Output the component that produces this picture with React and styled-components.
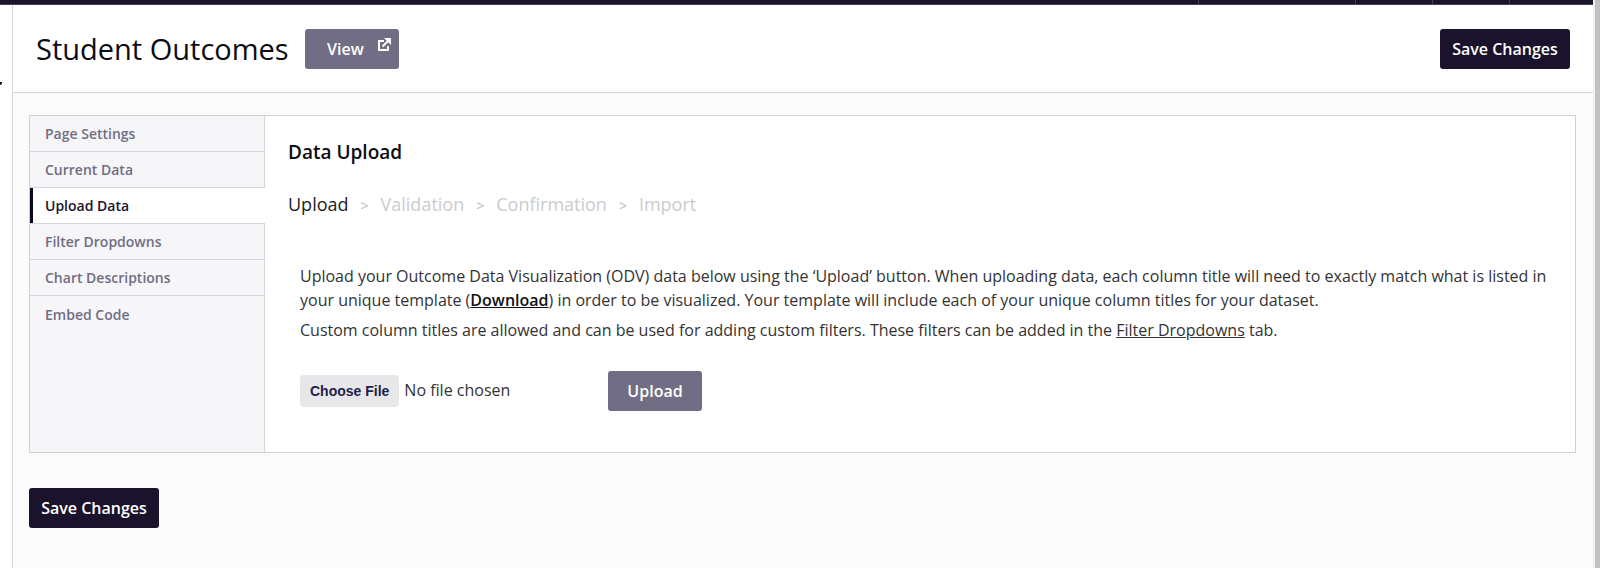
import React, { useState } from 'react';
import styled, { createGlobalStyle } from 'styled-components';

const tabs = [
  'Page Settings',
  'Current Data',
  'Upload Data',
  'Filter Dropdowns',
  'Chart Descriptions',
  'Embed Code',
];

const steps = ['Upload', 'Validation', 'Confirmation', 'Import'];

const ExternalIcon = () => (
  <svg width="13" height="13" viewBox="0 0 13 13" fill="none" stroke="currentColor" strokeWidth="2" aria-hidden="true">
    <path d="M6 3H1v9h9V8" />
    <path d="M4.5 8.5L10 3" />
    <path d="M6 0h7v7z" fill="currentColor" stroke="none" />
  </svg>
);

const App = () => {
  const [activeTab, setActiveTab] = useState('Upload Data');
  const [currentStep] = useState('Upload');

  return (
    <Window>
      <GlobalStyle />
      <Main>
        <TopBar>
          <TopItem $width={157} />
          <TopItem $width={77} />
          <TopItem $width={77} />
          <TopItem $width={84} />
        </TopBar>
        <Body>
          <Rail>
            <RailArrow />
          </Rail>
          <Content>
            <Header>
              <Title>Student Outcomes</Title>
              <ViewButton type="button">
                View
                <ExternalIcon />
              </ViewButton>
              <SaveButton type="button" $end>Save Changes</SaveButton>
            </Header>
            <Page>
              <Card>
                <TabList>
                  {tabs.map((tab) => (
                    <Tab
                      key={tab}
                      type="button"
                      $active={tab === activeTab}
                      onClick={() => setActiveTab(tab)}
                    >
                      {tab}
                    </Tab>
                  ))}
                </TabList>
                <Panel>
                  <PanelTitle>Data Upload</PanelTitle>
                  <Steps>
                    {steps.map((step) => (
                      <Step key={step} $current={step === currentStep}>{step}</Step>
                    ))}
                  </Steps>
                  <Instructions>
                    <p>
                      Upload your Outcome Data Visualization (ODV) data below using the ‘Upload’ button. When
                      uploading data, each column title will need to exactly match what is listed in your unique
                      template (<TextLink href="#download" $bold>Download</TextLink>) in order to be visualized. Your
                      template will include each of your unique column titles for your dataset.
                    </p>
                    <p>
                      Custom column titles are allowed and can be used for adding custom filters. These filters can be
                      added in the <TextLink href="#filters">Filter Dropdowns</TextLink> tab.
                    </p>
                  </Instructions>
                  <UploadForm onSubmit={(event) => event.preventDefault()}>
                    <FileInput type="file" aria-label="Data file" />
                    <UploadButton type="submit">Upload</UploadButton>
                  </UploadForm>
                </Panel>
              </Card>
              <SaveButton type="button">Save Changes</SaveButton>
            </Page>
          </Content>
        </Body>
      </Main>
      <ScrollTrack />
    </Window>
  );
};

const GlobalStyle = createGlobalStyle`
  * {
    box-sizing: border-box;
  }
  body {
    margin: 0;
    background: #fff;
    color: #333;
    font-family: 'Open Sans', 'Noto Sans', sans-serif;
    font-size: 16px;
  }
  button {
    font-family: inherit;
    cursor: pointer;
  }
`;

const Window = styled.div`
  display: flex;
  min-height: 100vh;
`;

const Main = styled.div`
  display: flex;
  flex-direction: column;
  flex: 1;
  min-width: 0;
`;

const ScrollTrack = styled.div`
  width: 7px;
  background: #c1c1c1;
  border-left: 2px solid #f1f1f1;
`;

const TopBar = styled.div`
  display: flex;
  justify-content: flex-end;
  height: 5px;
  background: #1a132b;
  border-bottom: 1px solid #47424f;
`;

const TopItem = styled.div`
  width: ${(props) => props.$width}px;
  border-left: 1px solid #47424f;
`;

const Body = styled.div`
  display: flex;
  flex: 1;
`;

const Rail = styled.div`
  width: 12px;
  padding-top: 77px;
`;

const RailArrow = styled.div`
  width: 2px;
  height: 3px;
  background: #1a132b;
  border-bottom-right-radius: 2px;
`;

const Content = styled.div`
  display: flex;
  flex-direction: column;
  flex: 1;
  min-width: 0;
  border-left: 1px solid #d5d4da;
  background: #fbfbfb;
`;

const Header = styled.header`
  display: flex;
  align-items: center;
  gap: 16px;
  height: 88px;
  padding: 0 23px;
  background: #fff;
  border-bottom: 1px solid #d5d4da;
`;

const Title = styled.h1`
  margin: 0;
  color: #0c0c14;
  font-size: 29px;
  font-weight: 500;
  line-height: 40px;
`;

const Button = styled.button`
  display: inline-flex;
  align-items: center;
  justify-content: center;
  height: 40px;
  padding: 0 12px;
  border: 0;
  border-radius: 3px;
  color: #fff;
  font-size: 16px;
  font-weight: 600;
  line-height: 24px;
`;

const SaveButton = styled(Button)`
  width: 130px;
  background: #1a132b;
  ${(props) => props.$end && 'margin-left: auto;'}
`;

const ViewButton = styled(Button)`
  justify-content: flex-end;
  gap: 14px;
  width: 94px;
  padding: 0 8px;
  background: #716d84;
  svg {
    margin-bottom: 8px;
  }
`;

const UploadButton = styled(Button)`
  width: 94px;
  background: #716d84;
`;

const Page = styled.main`
  padding: 22px 17px 40px 16px;
`;

const Card = styled.section`
  display: flex;
  min-height: 338px;
  margin-bottom: 35px;
  background: #fff;
  border: 1px solid #d0cfd6;
`;

const TabList = styled.nav`
  display: flex;
  flex-direction: column;
  width: 235px;
  background: #f6f6f9;
  border-right: 1px solid #d5d4da;
`;

const Tab = styled.button`
  height: 36px;
  margin-right: ${(props) => (props.$active ? '-1px' : '0')};
  padding: 0 15px;
  border: 0;
  border-bottom: 1px solid #d5d4da;
  background: ${(props) => (props.$active ? '#fff' : 'transparent')};
  box-shadow: ${(props) => (props.$active ? 'inset 3px 0 0 #0d0722' : 'none')};
  color: ${(props) => (props.$active ? '#1a132b' : '#716d84')};
  font-size: 14px;
  font-weight: 600;
  text-align: left;
  &:last-child {
    border-bottom: 0;
  }
`;

const Panel = styled.div`
  flex: 1;
  padding: 24px 12px 24px 23px;
`;

const PanelTitle = styled.h2`
  margin: 0 0 28px;
  color: #0c0c14;
  font-size: 19px;
  font-weight: 600;
  line-height: 24px;
`;

const Steps = styled.ol`
  display: flex;
  margin: 0 0 46px;
  padding: 0;
  list-style: none;
  line-height: 24px;
`;

const Step = styled.li`
  color: ${(props) => (props.$current ? '#1c1c1c' : '#ccc')};
  font-size: 18px;
  &:not(:first-child)::before {
    content: '>';
    margin: 0 12px;
    color: #bbb;
    font-size: 14px;
  }
`;

const Instructions = styled.div`
  padding-left: 12px;
  line-height: 24px;
  p {
    margin: 0 0 6px;
  }
`;

const TextLink = styled.a`
  color: ${(props) => (props.$bold ? '#111' : '#333')};
  font-weight: ${(props) => (props.$bold ? 600 : 400)};
`;

const UploadForm = styled.form`
  display: flex;
  align-items: center;
  padding: 23px 12px 0;
`;

const FileInput = styled.input`
  width: 308px;
  color: #333;
  font-family: inherit;
  font-size: 16px;
  &::file-selector-button {
    height: 32px;
    margin: 0 5px 0 0;
    padding: 0 10px;
    border: 0;
    border-radius: 4px;
    background: #e7e7ea;
    color: #241c4a;
    font-family: 'Liberation Sans', sans-serif;
    font-size: 14px;
    font-weight: 700;
  }
`;

export default App;
